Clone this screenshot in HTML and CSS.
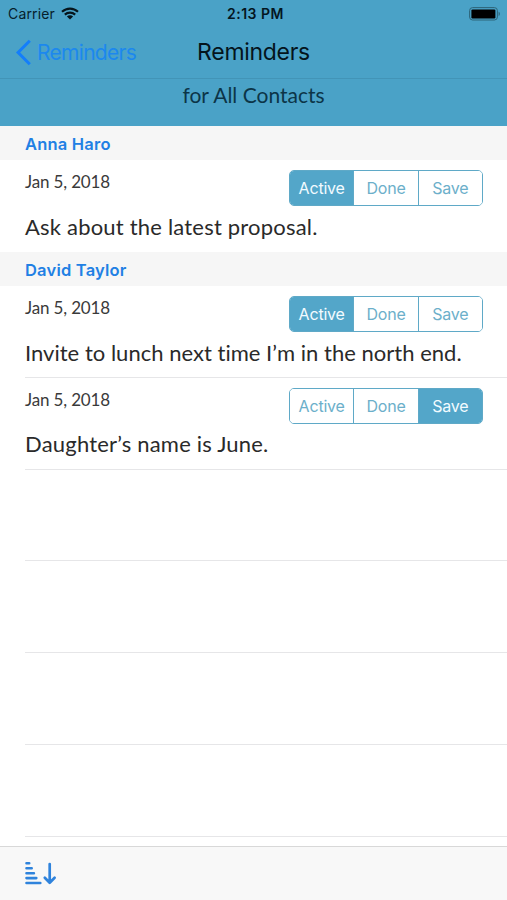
FILE: index.html
```
<!DOCTYPE html>
<html lang="en">
<head>
    <meta charset="UTF-8">
    <meta name="viewport" content="width=device-width, initial-scale=1.0">
    <title>Reminders</title>
    <link rel="stylesheet" href="styles.css">
</head>
<body>

    <div class="screen">

        <!-- Status bar -->
        <div class="status-bar">
            <div class="carrier">
                <span>Carrier</span>
                <svg class="wifi" width="18" height="13" viewBox="0 0 18 13">
                    <path d="M1 4.8C5.6.5 12.4.5 17 4.8M3.8 7.6c3-2.7 7.4-2.7 10.4 0" fill="none" stroke="#06151c" stroke-width="2.1"/>
                    <path d="M5.9 9.4c1.8-1.6 4.4-1.6 6.2 0L9 12.6z" fill="#06151c"/>
                </svg>
            </div>
            <span class="time">2:13 PM</span>
            <svg class="battery" width="32" height="14" viewBox="0 0 32 14">
                <rect x=".6" y=".6" width="27.8" height="12.4" rx="3" fill="none" stroke="#2d6478" stroke-width="1"/>
                <rect x="2.4" y="2.4" width="24" height="9" rx="1.2" fill="#000"/>
                <path d="M29.6 4.8c1.7.6 1.7 3.6 0 4.2z" fill="#2d6478"/>
            </svg>
        </div>

        <!-- Navigation bar -->
        <div class="nav-bar">
            <a class="back-link">
                <svg width="17" height="27" viewBox="0 0 17 27">
                    <path d="M14.8 1.7L3.1 13.5l11.7 11.8" fill="none" stroke="#147efb" stroke-width="3"/>
                </svg>
                <span>Reminders</span>
            </a>
            <h1>Reminders</h1>
        </div>
        <div class="subtitle"><span>for All Contacts</span></div>

        <!-- Reminder list -->
        <div class="list">
            <h2 class="section-title">Anna Haro</h2>
            <div class="reminder last">
                <div class="reminder-top">
                    <span class="date">Jan 5, 2018</span>
                    <div class="segments">
                        <button class="selected">Active</button>
                        <button>Done</button>
                        <button>Save</button>
                    </div>
                </div>
                <p>Ask about the latest proposal.</p>
            </div>

            <h2 class="section-title">David Taylor</h2>
            <div class="reminder">
                <div class="reminder-top">
                    <span class="date">Jan 5, 2018</span>
                    <div class="segments">
                        <button class="selected">Active</button>
                        <button>Done</button>
                        <button>Save</button>
                    </div>
                </div>
                <p class="long">Invite to lunch next time I’m in the north end.</p>
            </div>
            <div class="reminder">
                <div class="reminder-top">
                    <span class="date">Jan 5, 2018</span>
                    <div class="segments">
                        <button>Active</button>
                        <button>Done</button>
                        <button class="selected">Save</button>
                    </div>
                </div>
                <p>Daughter’s name is June.</p>
            </div>

            <!-- Empty rows -->
            <div class="empty-row"></div>
            <div class="empty-row"></div>
            <div class="empty-row"></div>
            <div class="empty-row"></div>
        </div>

        <!-- Toolbar -->
        <div class="toolbar">
            <svg width="32" height="24" viewBox="0 0 32 24">
                <path d="M1.5 2.3h2.7M1.5 7.3h5.2M1.5 12.2h7.4M1.5 17.1h9.8M1.5 22h13.8" stroke="#2f83dc" stroke-width="2.6" stroke-linecap="round"/>
                <path d="M24.7 3v18.5M19.8 16.7l4.9 5 4.9-5" fill="none" stroke="#2f83dc" stroke-width="2.7" stroke-linecap="round" stroke-linejoin="round"/>
            </svg>
        </div>

    </div>

</body>
</html>
```
FILE: styles.css
```
/* General styles */
* {
    box-sizing: border-box;
}

body {
    margin: 0;
    background-color: #fff;
    font-family: Inter, "Liberation Sans", sans-serif;
    color: #2a2a2a;
}

h1, h2, p {
    margin: 0;
}

svg {
    display: block;
}

.screen {
    display: flex;
    flex-direction: column;
    height: 900px;
    overflow: hidden;
}

/* Status bar */
.status-bar {
    display: grid;
    grid-template-columns: 1fr auto 1fr;
    align-items: center;
    height: 27px;
    padding: 0 6px 0 8px;
    background-color: #4aa2c7;
    color: #06202c;
    font-size: 14px;
}

.carrier {
    display: flex;
    align-items: center;
    gap: 6px;
    letter-spacing: 0.15px;
}

.time {
    padding-left: 2px;
    color: #04161f;
    font-weight: 600;
    letter-spacing: 0.5px;
}

.battery {
    justify-self: end;
}

/* Navigation bar */
.nav-bar {
    display: grid;
    grid-template-columns: 1fr auto 1fr;
    align-items: center;
    height: 52px;
    padding: 0 15px 2px;
    border-bottom: 1px solid #4294b7;
    background-color: #4aa2c7;
}

.back-link {
    display: flex;
    align-items: center;
    gap: 5px;
    padding-top: 1px;
    color: #1c88ee;
    font-size: 21px;
    letter-spacing: -0.7px;
}

.nav-bar h1 {
    color: #04141c;
    font-size: 23px;
    font-weight: 400;
    letter-spacing: -0.3px;
}

.subtitle {
    height: 47px;
    padding-top: 3px;
    background-color: #4aa2c7;
    color: #0c3547;
    font-family: Lato, sans-serif;
    font-size: 21px;
    line-height: 26px;
    text-align: center;
}

/* Reminder list */
.list {
    flex: 1;
    overflow: hidden;
}

.section-title {
    height: 34.3px;
    padding-left: 25px;
    background-color: #f6f6f6;
    color: #2180e4;
    font-size: 16.5px;
    font-weight: 600;
    letter-spacing: 0.2px;
    line-height: 36px;
}

.reminder {
    position: relative;
    height: 91.7px;
    padding: 10px 24px 0 25px;
}

.reminder-top {
    display: flex;
    justify-content: space-between;
    height: 36px;
}

.date {
    color: #3a3a3a;
    font-family: Lato, sans-serif;
    font-size: 17px;
    letter-spacing: -0.15px;
    line-height: 23px;
}

.reminder p {
    margin-top: 6.5px;
    font-family: Lato, sans-serif;
    font-size: 22px;
    letter-spacing: 0.2px;
    line-height: 28px;
    white-space: nowrap;
}

.reminder .long {
    letter-spacing: 0.02px;
}

/* Row separators start at the text inset */
.reminder::after {
    content: "";
    position: absolute;
    left: 25px;
    right: 0;
    bottom: 0;
    height: 1px;
    background-color: #e6e6e8;
}

.reminder.last::after {
    display: none;
}

.empty-row {
    height: 91.8px;
    margin-left: 25px;
    border-bottom: 1px solid #e6e6e8;
}

/* Segmented control */
.segments {
    display: flex;
    width: 194px;
    height: 36px;
    border: 1.5px solid #5fa9c7;
    border-radius: 5px;
    overflow: hidden;
}

.segments button {
    flex: 1;
    padding: 0;
    border: none;
    border-left: 1px solid #5fa9c7;
    background-color: #fff;
    color: #6cafca;
    font-family: inherit;
    font-size: 16px;
    letter-spacing: -0.2px;
}

.segments button:first-child {
    border-left: none;
}

.segments .selected {
    background-color: #53a6c9;
    color: #f2fbff;
}

/* Toolbar */
.toolbar {
    display: flex;
    align-items: flex-start;
    height: 54px;
    padding: 14px 25px 0;
    border-top: 1px solid #d8d8d8;
    background-color: #f8f8f8;
}
```
